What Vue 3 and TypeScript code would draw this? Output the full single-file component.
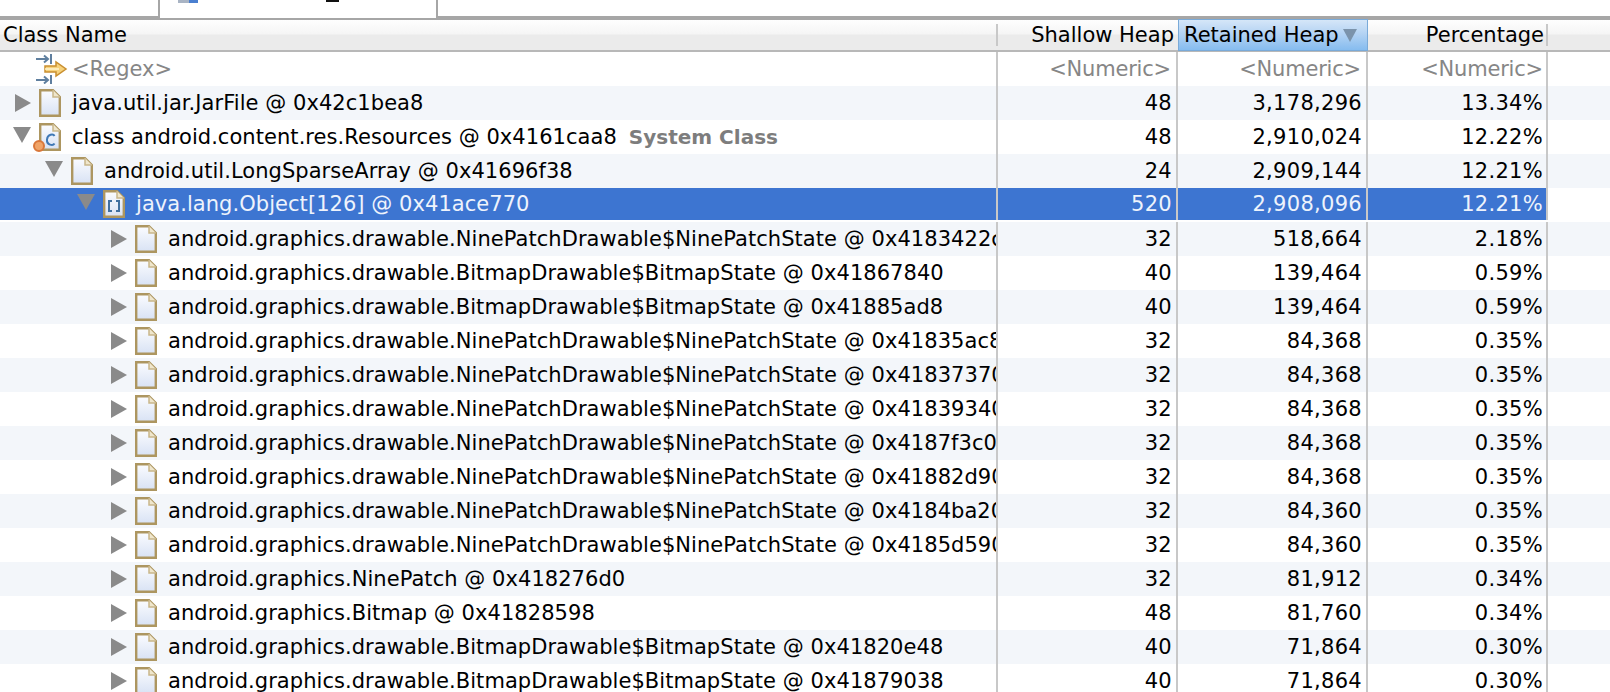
<template>
  <div class="view">
    <div class="tabbar">
      <div class="tab-rest tab-left"></div>
      <div class="tab">
        <span class="tab-icon"><i class="tab-icon-grey"></i><i class="tab-icon-blue"></i></span>
        <span class="tab-mark"></span>
      </div>
      <div class="tab-rest"></div>
    </div>

    <div class="head grid">
      <div class="hcell name-col"><span>Class Name</span></div>
      <div class="hcell num">Shallow Heap</div>
      <div class="hcell sorted">
        <span>Retained Heap</span>
        <svg class="sort-arrow" width="14" height="13" viewBox="0 0 14 13"><path d="M0 0h14L7 13z" fill="#7b93ab" /></svg>
      </div>
      <div class="hcell num last">Percentage</div>
    </div>

    <div class="row grid filter">
      <div class="cell name-col regex-cell">
        <svg class="regex-icon" width="32" height="30" viewBox="0 0 32 30">
          <g fill="none" stroke="#5f7f9f" stroke-width="2">
            <path d="M0 5h12M8 1.500l4 3.500-4 3.500M15 0v10" />
            <path d="M0 26h12M8 22.500l4 3.500-4 3.500M15 21v9" />
          </g>
          <path d="M9 12h11V8l10 7-10 7v-4H9z" fill="#f6d27c" stroke="#c98f2f" stroke-width="1.500" />
          <path d="M9 15h14" stroke="#fff4d0" stroke-width="1.500" />
        </svg>
        <span>&lt;Regex&gt;</span>
      </div>
      <div class="cell num">&lt;Numeric&gt;</div>
      <div class="cell num">&lt;Numeric&gt;</div>
      <div class="cell num">&lt;Numeric&gt;</div>
    </div>

    <div
      v-for="(row, idx) in rows"
      :key="idx"
      class="row grid"
      :class="{ tinted: idx % 2 === 0, selected: row.selected }"
    >
      <div class="cell name-col" :style="{ paddingLeft: row.depth * 32 + 14 + 'px' }">
        <span class="arrow" :class="{ open: row.open }">
          <svg v-if="row.open" width="18" height="16" viewBox="0 0 18 16"><path d="M0 0h18L9 16z" fill="#8a8a8a" /></svg>
          <svg v-else width="16" height="18" viewBox="0 0 16 18"><path d="M0 0l16 9L0 18z" fill="#8a8a8a" /></svg>
        </span>
        <span class="page-wrap">
          <svg class="page" width="22" height="28" viewBox="0 0 22 28">
            <defs>
              <linearGradient :id="`pg${idx}`" x1="0" y1="0" x2="0" y2="1">
                <stop offset="0" stop-color="#fbfcff" />
                <stop offset="1" stop-color="#d8e2f4" />
              </linearGradient>
            </defs>
            <path d="M1.200 1.200h12.800l6.800 6.800v18.800H1.200z" :fill="`url(#pg${idx})`" stroke="#ad9660" stroke-width="2.400" />
            <path d="M14 1v7h7" fill="#efe6cc" stroke="#c9b78a" stroke-width="1.500" />
            <path v-if="row.kind === 'class'" d="M15.500 13c-1-2.200-7-2.200-7.500 3.500s6 6.500 7.500 4" fill="none" stroke="#3f78b5" stroke-width="2" />
            <path v-if="row.kind === 'array'" d="M9 11H6v10h3M13 11h3v10h-3" fill="none" stroke="#3f6f9f" stroke-width="2" />
          </svg>
          <span v-if="row.kind === 'class'" class="static-dot"></span>
        </span>
        <span class="label">{{ row.name }}<b v-if="row.extra" class="extra">{{ row.extra }}</b></span>
      </div>
      <div class="cell num">{{ row.shallow }}</div>
      <div class="cell num">{{ row.retained }}</div>
      <div class="cell num">{{ row.pct }}</div>
    </div>
  </div>
</template>

<script setup lang="ts">
interface HeapRow {
  name: string
  extra?: string
  depth: number
  open?: boolean
  kind?: 'class' | 'array'
  selected?: boolean
  shallow: string
  retained: string
  pct: string
}

const nine = 'android.graphics.drawable.NinePatchDrawable$NinePatchState @ '
const bmp = 'android.graphics.drawable.BitmapDrawable$BitmapState @ '

const rows: HeapRow[] = [
  { name: 'java.util.jar.JarFile @ 0x42c1bea8', depth: 0, shallow: '48', retained: '3,178,296', pct: '13.34%' },
  { name: 'class android.content.res.Resources @ 0x4161caa8', extra: 'System Class', depth: 0, open: true, kind: 'class', shallow: '48', retained: '2,910,024', pct: '12.22%' },
  { name: 'android.util.LongSparseArray @ 0x41696f38', depth: 1, open: true, shallow: '24', retained: '2,909,144', pct: '12.21%' },
  { name: 'java.lang.Object[126] @ 0x41ace770', depth: 2, open: true, kind: 'array', selected: true, shallow: '520', retained: '2,908,096', pct: '12.21%' },
  { name: nine + '0x4183422c', depth: 3, shallow: '32', retained: '518,664', pct: '2.18%' },
  { name: bmp + '0x41867840', depth: 3, shallow: '40', retained: '139,464', pct: '0.59%' },
  { name: bmp + '0x41885ad8', depth: 3, shallow: '40', retained: '139,464', pct: '0.59%' },
  { name: nine + '0x41835ac8', depth: 3, shallow: '32', retained: '84,368', pct: '0.35%' },
  { name: nine + '0x41837370', depth: 3, shallow: '32', retained: '84,368', pct: '0.35%' },
  { name: nine + '0x41839340', depth: 3, shallow: '32', retained: '84,368', pct: '0.35%' },
  { name: nine + '0x4187f3c0', depth: 3, shallow: '32', retained: '84,368', pct: '0.35%' },
  { name: nine + '0x41882d90', depth: 3, shallow: '32', retained: '84,368', pct: '0.35%' },
  { name: nine + '0x4184ba20', depth: 3, shallow: '32', retained: '84,360', pct: '0.35%' },
  { name: nine + '0x4185d590', depth: 3, shallow: '32', retained: '84,360', pct: '0.35%' },
  { name: 'android.graphics.NinePatch @ 0x418276d0', depth: 3, shallow: '32', retained: '81,912', pct: '0.34%' },
  { name: 'android.graphics.Bitmap @ 0x41828598', depth: 3, shallow: '48', retained: '81,760', pct: '0.34%' },
  { name: bmp + '0x41820e48', depth: 3, shallow: '40', retained: '71,864', pct: '0.30%' },
  { name: bmp + '0x41879038', depth: 3, shallow: '40', retained: '71,864', pct: '0.30%' },
]
</script>

<style scoped>
.view {
  width: 1610px;
  height: 692px;
  overflow: hidden;
  background: #fff;
  font-family: "DejaVu Sans", "Liberation Sans", sans-serif;
  font-size: 21px;
  color: #000;
}

.tabbar {
  display: flex;
  height: 18px;
}

.tab-rest {
  flex: 1;
  border-bottom: 2px solid #a6a6a6;
}

.tab-left {
  flex: none;
  width: 158px;
}

.tab {
  display: flex;
  justify-content: flex-start;
  width: 280px;
  height: 18px;
  box-sizing: border-box;
  border-left: 2px solid #a6a6a6;
  border-right: 2px solid #a6a6a6;
}

.tab-icon {
  display: flex;
  height: 3px;
  margin-left: 18px;
}

.tab-icon-grey {
  width: 11px;
  background: #a9b4c4;
}

.tab-icon-blue {
  width: 9px;
  background: #4a7fd0;
}

.tab-mark {
  width: 13px;
  height: 2px;
  margin-left: 128px;
  background: #111;
}

.grid {
  display: grid;
  grid-template-columns: 998px 180px 190px 180px 1fr;
}

.head {
  height: 30px;
  border-top: 2px solid #a6a6a6;
  border-bottom: 2px solid #b8b8b8;
  background: linear-gradient(#fefefe 0, #f5f5f5 14px, #ebebeb 15px, #ebebeb 100%);
}

.hcell {
  display: flex;
  align-items: center;
  justify-content: flex-end;
  height: 30px;
  padding-right: 6px;
  box-sizing: border-box;
  position: relative;
}

.hcell.name-col {
  justify-content: flex-start;
  padding-left: 3px;
}

.hcell.name-col::after,
.hcell.last::after {
  content: '';
  position: absolute;
  right: 0;
  top: 4px;
  bottom: 4px;
  width: 2px;
  background: #c8c8c8;
}

.hcell.sorted {
  justify-content: flex-start;
  gap: 4px;
  margin: -1px 0;
  height: 32px;
  padding: 0 0 0 5px;
  border: 1px solid #7aaad8;
  background: linear-gradient(#d5e6f8 0, #b4d3f3 45%, #86bcef 100%);
}

.row {
  height: 34px;
}

.filter {
  color: #868686;
}

.tinted {
  background: #f3f6fa;
}

.selected {
  height: 32px;
  margin-bottom: 2px;
  background: #fff;
  color: #eef3fc;
}

.cell {
  display: flex;
  align-items: center;
  min-width: 0;
  overflow: hidden;
  white-space: nowrap;
  box-sizing: border-box;
  border-right: 2px solid #c8c8c8;
}

.selected .cell {
  background: #3d75d1;
}

.num {
  justify-content: flex-end;
  padding-right: 4px;
  letter-spacing: 0.3px;
}

.cell.num:nth-child(4) {
  padding-right: 3px;
}

.hcell.num {
  letter-spacing: 0;
}

.filter .num {
  padding-right: 5px;
  letter-spacing: -0.2px;
}

.regex-cell {
  padding-left: 36px;
}

.regex-icon {
  flex: none;
  margin-right: 4px;
}

.arrow {
  flex: none;
  display: flex;
  width: 24px;
  margin-left: 1px;
  margin-top: -1px;
}

.arrow.open {
  margin-left: -1px;
  width: 26px;
  margin-top: -5px;
}

.page-wrap {
  flex: none;
  position: relative;
  display: flex;
  margin-right: 11px;
}

.static-dot {
  position: absolute;
  left: -6px;
  top: 17px;
  width: 12px;
  height: 12px;
  box-sizing: border-box;
  border-radius: 50%;
  background: #f0a468;
  border: 2px solid #d9773a;
}

.label {
  flex: none;
  letter-spacing: 0.05px;
}

.extra {
  margin-left: 12px;
  font-size: 20px;
  letter-spacing: 0;
  color: #7d7d7d;
}
</style>

<style>
html,
body {
  margin: 0;
  overflow: hidden;
}
</style>
